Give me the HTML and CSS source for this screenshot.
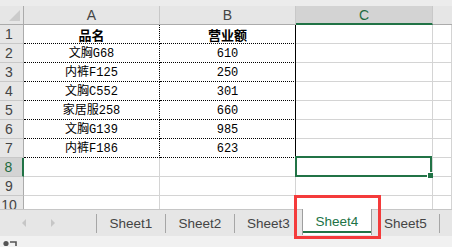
FILE: index.html
```html
<!DOCTYPE html>
<html lang="zh-CN">
<head>
  <meta charset="UTF-8">
  <title>Sheet4</title>
  <link rel="stylesheet" href="styles.css">
</head>
<body>
  <!-- Worksheet area -->
  <div class="sheet">
    <div class="top-strip"></div>
    <div class="grid">
      <div class="corner"><span class="corner-tri"></span></div>
      <div class="col-head">A</div>
      <div class="col-head">B</div>
      <div class="col-head sel">C</div>
      <div class="col-head last"></div>

      <div class="row-head">1</div>
      <div class="cell t ta th">品名</div>
      <div class="cell t tb th">营业额</div>
      <div class="cell"></div>
      <div class="cell"></div>

      <div class="row-head">2</div>
      <div class="cell t ta">文胸G68</div>
      <div class="cell t tb">610</div>
      <div class="cell"></div>
      <div class="cell"></div>

      <div class="row-head">3</div>
      <div class="cell t ta">内裤F125</div>
      <div class="cell t tb">250</div>
      <div class="cell"></div>
      <div class="cell"></div>

      <div class="row-head">4</div>
      <div class="cell t ta">文胸C552</div>
      <div class="cell t tb">301</div>
      <div class="cell"></div>
      <div class="cell"></div>

      <div class="row-head">5</div>
      <div class="cell t ta">家居服258</div>
      <div class="cell t tb">660</div>
      <div class="cell"></div>
      <div class="cell"></div>

      <div class="row-head">6</div>
      <div class="cell t ta">文胸G139</div>
      <div class="cell t tb">985</div>
      <div class="cell"></div>
      <div class="cell"></div>

      <div class="row-head">7</div>
      <div class="cell t ta">内裤F186</div>
      <div class="cell t tb">623</div>
      <div class="cell"></div>
      <div class="cell"></div>

      <div class="row-head sel">8</div>
      <div class="cell"></div>
      <div class="cell"></div>
      <div class="cell active"><span class="handle"></span></div>
      <div class="cell"></div>

      <div class="row-head">9</div>
      <div class="cell"></div>
      <div class="cell"></div>
      <div class="cell"></div>
      <div class="cell"></div>

      <div class="row-head">10</div>
      <div class="cell"></div>
      <div class="cell"></div>
      <div class="cell"></div>
      <div class="cell"></div>
    </div>
  </div>

  <!-- Sheet tabs -->
  <div class="tab-bar">
    <div class="nav">
      <span class="arrow left"></span>
      <span class="arrow right"></span>
    </div>
    <span class="sep"></span>
    <div class="tab">Sheet1</div>
    <span class="sep"></span>
    <div class="tab">Sheet2</div>
    <span class="sep"></span>
    <div class="tab narrow">Sheet3</div>
    <div class="tab current">Sheet4</div>
    <div class="tab narrow">Sheet5</div>
    <span class="sep"></span>
  </div>

  <!-- Status bar -->
  <div class="status-bar">
    <svg class="macro-icon" width="14" height="7" viewBox="0 0 14 7">
      <circle cx="3" cy="3.5" r="2.6" fill="#555"/>
      <path d="M7 2h6v4" fill="none" stroke="#555" stroke-width="1.6"/>
    </svg>
  </div>
</body>
</html>
```

FILE: styles.css
```css
/* Page */
body {
  margin: 0;
  width: 452px;
  height: 247px;
  overflow: hidden;
  background: #fff;
  font-family: 'Liberation Sans', Arial, sans-serif;
}

/* Worksheet */
.sheet {
  height: 209px;
  overflow: hidden;
}

.top-strip {
  height: 6px;
  background: #ececec;
}

.grid {
  display: grid;
  grid-template-columns: 24px 136px 136px 137px 1fr;
  grid-auto-rows: 19px;
}

.grid > div {
  box-sizing: border-box;
  display: flex;
  align-items: center;
  justify-content: center;
}

/* Headers */
.corner {
  position: relative;
  background: #e6e6e6;
  border-right: 1px solid #ababab;
  border-bottom: 1px solid #ababab;
}

.corner-tri {
  position: absolute;
  left: 9px;
  top: 4px;
  width: 0;
  height: 0;
  border-left: 11px solid transparent;
  border-bottom: 11px solid #cbcbcb;
}

.col-head {
  background: #e6e6e6;
  color: #444;
  font-size: 14px;
  border-right: 1px solid #c8c8c8;
  border-bottom: 1px solid #ababab;
}

.col-head.sel {
  background: #d3d3d3;
  color: #1e6b41;
  border-bottom: 2px solid #217346;
}

.col-head.last {
  border-right: none;
}

.row-head {
  background: #e6e6e6;
  color: #444;
  font-size: 14px;
  padding-right: 5px;
  border-right: 1px solid #ababab;
  border-bottom: 1px solid #c8c8c8;
}

.row-head.sel {
  background: #d3d3d3;
  color: #1e6b41;
  border-right: 2px solid #217346;
}

/* Cells */
.cell {
  border-right: 1px solid #d4d4d4;
  border-bottom: 1px solid #d4d4d4;
  color: #000;
  font-family: 'Liberation Mono', 'Noto Sans CJK SC', monospace;
  font-size: 12px;
  line-height: 12px;
  padding-top: 1px;
}

.cell.t {
  border-bottom: 1px dotted #000;
}

.cell.ta {
  border-right: 1px dotted #000;
}

.cell.tb {
  border-right: 1px solid #000;
}

.cell.th {
  font-family: 'Noto Sans CJK SC', sans-serif;
  font-weight: bold;
  font-size: 13px;
  line-height: 13px;
  padding-top: 0;
}

/* Selected cell C8 */
.cell.active {
  position: relative;
}

.cell.active::after {
  content: '';
  position: absolute;
  top: -2px;
  left: -1px;
  right: 0;
  bottom: -1px;
  border: 2px solid #217346;
}

.handle {
  position: absolute;
  right: -1px;
  bottom: -2px;
  width: 5px;
  height: 5px;
  background: #217346;
  border-left: 1px solid #fff;
  border-top: 1px solid #fff;
  z-index: 2;
}

/* Tab bar */
.tab-bar {
  display: flex;
  align-items: center;
  height: 27px;
  box-sizing: border-box;
  border-top: 1px solid #c6c6c6;
  background: #e6e6e6;
}

.nav {
  width: 96px;
  height: 100%;
  display: flex;
  align-items: center;
  padding-left: 22px;
  gap: 25px;
  box-sizing: border-box;
}

.arrow {
  width: 0;
  height: 0;
  border-top: 4px solid transparent;
  border-bottom: 4px solid transparent;
}

.arrow.left {
  border-right: 4px solid #c6c6c6;
}

.arrow.right {
  border-left: 4px solid #c6c6c6;
}

.sep {
  width: 1px;
  height: 19px;
  background: #a6a6a6;
}

.tab {
  width: 68px;
  text-align: center;
  font-size: 13.5px;
  color: #444;
}

.tab.narrow {
  width: 67px;
}

.tab.current {
  position: relative;
  align-self: flex-start;
  width: 70px;
  height: 26px;
  margin-top: -1px;
  box-sizing: border-box;
  padding-top: 5px;
  background: #fff;
  color: #217346;
  border-left: 1px solid #9e9e9e;
  border-right: 1px solid #9e9e9e;
}

.tab.current::before {
  content: '';
  position: absolute;
  left: 0;
  right: 0;
  bottom: 2px;
  height: 2px;
  background: #217346;
}

/* Red highlight box round the active tab */
.tab.current::after {
  content: '';
  position: absolute;
  top: -14px;
  left: -9px;
  right: -10px;
  bottom: -4px;
  border: 3px solid #f43b3b;
  z-index: 3;
}

/* Status bar */
.status-bar {
  height: 11px;
  background: #f1f1f1;
  display: flex;
  align-items: flex-end;
  padding-left: 3px;
}

.macro-icon {
  display: block;
}
```
